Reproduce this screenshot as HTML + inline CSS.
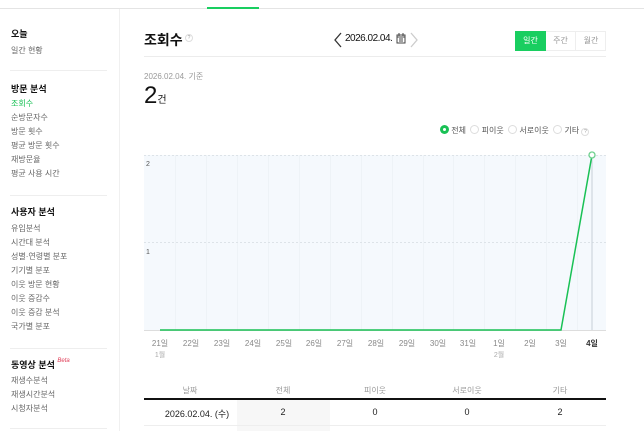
<!DOCTYPE html><html><head><meta charset="utf-8"><style>
*{margin:0;padding:0;box-sizing:border-box}
body{width:644px;height:431px;overflow:hidden;background:#fff;font-family:"Liberation Sans","Noto Sans CJK KR",sans-serif;position:relative;color:#333}
.a{position:absolute;white-space:nowrap}
.h{font-size:9px;font-weight:bold;color:#111}
.i{font-size:8px;color:#666}
.sep{position:absolute;left:10px;width:97px;height:1px;background:#eee}
.xl{font-size:8px;color:#888;transform:translateX(-50%)}
.th{font-size:8px;color:#999;transform:translateX(-50%)}
.td{font-size:9px;color:#222;transform:translateX(-50%)}
</style></head><body>
<div class="a" style="left:0;top:8px;width:644px;height:1px;background:#e4e4e4"></div>
<div class="a" style="left:207px;top:7px;width:52px;height:2px;background:#19ce60"></div>
<div class="a" style="left:119px;top:9px;width:1px;height:422px;background:#f0f0f0"></div>

<div class="a h" style="left:11px;top:27px">오늘</div>
<div class="a i" style="left:11px;top:45px">일간 현황</div>
<div class="sep" style="top:70px"></div>
<div class="a h" style="left:11px;top:82px">방문 분석</div>
<div class="a i" style="left:11px;top:98px;color:#19c155">조회수</div>
<div class="a i" style="left:11px;top:112px">순방문자수</div>
<div class="a i" style="left:11px;top:126px">방문 횟수</div>
<div class="a i" style="left:11px;top:140px">평균 방문 횟수</div>
<div class="a i" style="left:11px;top:154px">재방문율</div>
<div class="a i" style="left:11px;top:168px">평균 사용 시간</div>
<div class="sep" style="top:195px"></div>
<div class="a h" style="left:11px;top:205px">사용자 분석</div>
<div class="a i" style="left:11px;top:223px">유입분석</div>
<div class="a i" style="left:11px;top:237px">시간대 분석</div>
<div class="a i" style="left:11px;top:251px">성별·연령별 분포</div>
<div class="a i" style="left:11px;top:265px">기기별 분포</div>
<div class="a i" style="left:11px;top:279px">이웃 방문 현황</div>
<div class="a i" style="left:11px;top:293px">이웃 증감수</div>
<div class="a i" style="left:11px;top:307px">이웃 증감 분석</div>
<div class="a i" style="left:11px;top:321px">국가별 분포</div>
<div class="sep" style="top:348px"></div>
<div class="a h" style="left:11px;top:358px">동영상 분석 <i style="color:#e0405a;font-size:6px;font-weight:normal;vertical-align:top">Beta</i></div>
<div class="a i" style="left:11px;top:375px">재생수분석</div>
<div class="a i" style="left:11px;top:389px">재생시간분석</div>
<div class="a i" style="left:11px;top:403px">시청자분석</div>
<div class="sep" style="top:428px"></div>

<div class="a" style="left:144px;top:30px;font-size:14px;font-weight:bold;color:#111">조회수</div>
<div class="a" style="left:185px;top:34px;width:8px;height:8px;border:1px solid #ddd;border-radius:50%;font-size:5px;color:#999;text-align:center;line-height:6px">?</div>
<svg class="a" style="left:333px;top:32px" width="10" height="16"><path d="M8 1L2 8l6 7" fill="none" stroke="#333" stroke-width="1.3"/></svg>
<div class="a" style="left:345px;top:33px;font-size:10px;color:#111;letter-spacing:-0.5px">2026.02.04.</div>
<svg class="a" style="left:396px;top:33px" width="10" height="11"><rect x="1" y="2" width="8" height="8" fill="none" stroke="#444"/><path d="M3 0v3M7 0v3M1 4h8M3 6h4M3 8h4" stroke="#444"/></svg>
<svg class="a" style="left:409px;top:32px" width="10" height="16"><path d="M2 1l6 7-6 7" fill="none" stroke="#ccc" stroke-width="1.3"/></svg>
<div class="a" style="left:515px;top:31px;width:31px;height:20px;background:#19ce60;color:#fff;font-size:8px;text-align:center;line-height:20px">일간</div>
<div class="a" style="left:546px;top:31px;width:60px;height:20px;border:1px solid #eee;border-left:none"></div>
<div class="a" style="left:546px;top:31px;width:30px;height:20px;border-right:1px solid #eee;color:#999;font-size:8px;text-align:center;line-height:20px">주간</div>
<div class="a" style="left:576px;top:31px;width:30px;height:20px;color:#999;font-size:8px;text-align:center;line-height:20px">월간</div>
<div class="a" style="left:144px;top:56px;width:462px;height:1px;background:#ececec"></div>

<div class="a" style="left:144px;top:71px;font-size:8px;color:#999">2026.02.04. 기준</div>
<div class="a" style="left:144px;top:83px;font-size:24px;color:#111;line-height:26px">2<span style="font-size:10px">건</span></div>

<div class="a" style="left:440px;top:125px;font-size:8px;color:#555">
<span style="display:inline-block;width:9px;height:9px;border-radius:50%;background:#19c155;vertical-align:-1px;position:relative"><span style="position:absolute;left:3px;top:3px;width:3px;height:3px;background:#fff;border-radius:50%"></span></span> 전체 &nbsp;<span style="display:inline-block;width:9px;height:9px;border-radius:50%;border:1px solid #ddd;vertical-align:-1px"></span> 피이웃 &nbsp;<span style="display:inline-block;width:9px;height:9px;border-radius:50%;border:1px solid #ddd;vertical-align:-1px"></span> 서로이웃 &nbsp;<span style="display:inline-block;width:9px;height:9px;border-radius:50%;border:1px solid #ddd;vertical-align:-1px"></span> 기타 <span style="display:inline-block;width:8px;height:8px;border-radius:50%;border:1px solid #ddd;font-size:5px;text-align:center;line-height:6px;color:#999">?</span></div>

<svg class="a" style="left:0;top:0" width="644" height="431">
<rect x="144" y="155" width="462" height="175" fill="#f5f9fd"/>
<g stroke="#eef3f7" stroke-width="1">
<path d="M175.5 155v175M206.5 155v175M237.5 155v175M268.5 155v175M299.5 155v175M330.5 155v175M361.5 155v175M392.5 155v175M423.5 155v175M453.5 155v175M484.5 155v175M515.5 155v175M546.5 155v175M577.5 155v175"/>
</g>
<path d="M144 155.5h462M144 242.5h462" stroke="#dde3e8" stroke-dasharray="2,2"/>
<path d="M144 330.5h462" stroke="#ddd"/>
<path d="M592 155v175" stroke="#c8d0d8"/>
<polyline points="160,330 561,330 592,155" fill="none" stroke="#19c155" stroke-width="1.5"/>
<circle cx="592" cy="155" r="3" fill="#fff" stroke="#6dd08e" stroke-width="1.3"/>
<text x="146" y="166" font-size="7" fill="#555" font-family="Liberation Sans">2</text>
<text x="146" y="254" font-size="7" fill="#555" font-family="Liberation Sans">1</text>
</svg>

<div class="a xl" style="left:160px;top:338px">21일</div>
<div class="a xl" style="left:160px;top:350px;font-size:7px;color:#aaa">1월</div>
<div class="a xl" style="left:191px;top:338px">22일</div>
<div class="a xl" style="left:222px;top:338px">23일</div>
<div class="a xl" style="left:253px;top:338px">24일</div>
<div class="a xl" style="left:284px;top:338px">25일</div>
<div class="a xl" style="left:314px;top:338px">26일</div>
<div class="a xl" style="left:345px;top:338px">27일</div>
<div class="a xl" style="left:376px;top:338px">28일</div>
<div class="a xl" style="left:407px;top:338px">29일</div>
<div class="a xl" style="left:438px;top:338px">30일</div>
<div class="a xl" style="left:468px;top:338px">31일</div>
<div class="a xl" style="left:499px;top:338px">1일</div>
<div class="a xl" style="left:499px;top:350px;font-size:7px;color:#aaa">2월</div>
<div class="a xl" style="left:530px;top:338px">2일</div>
<div class="a xl" style="left:561px;top:338px">3일</div>
<div class="a xl" style="left:592px;top:338px;font-weight:bold;color:#333">4일</div>

<div class="a" style="left:237px;top:399px;width:93px;height:32px;background:#f7f7f7"></div>
<div class="a th" style="left:190px;top:385px">날짜</div>
<div class="a th" style="left:283px;top:385px">전체</div>
<div class="a th" style="left:375px;top:385px">피이웃</div>
<div class="a th" style="left:467px;top:385px">서로이웃</div>
<div class="a th" style="left:560px;top:385px">기타</div>
<div class="a" style="left:144px;top:398px;width:462px;height:2px;background:#111"></div>
<div class="a td" style="left:197px;top:407px">2026.02.04. (수)</div>
<div class="a td" style="left:283px;top:407px">2</div>
<div class="a td" style="left:375px;top:407px">0</div>
<div class="a td" style="left:467px;top:407px">0</div>
<div class="a td" style="left:560px;top:407px">2</div>
<div class="a" style="left:144px;top:425px;width:462px;height:1px;background:#eee"></div>
</body></html>
